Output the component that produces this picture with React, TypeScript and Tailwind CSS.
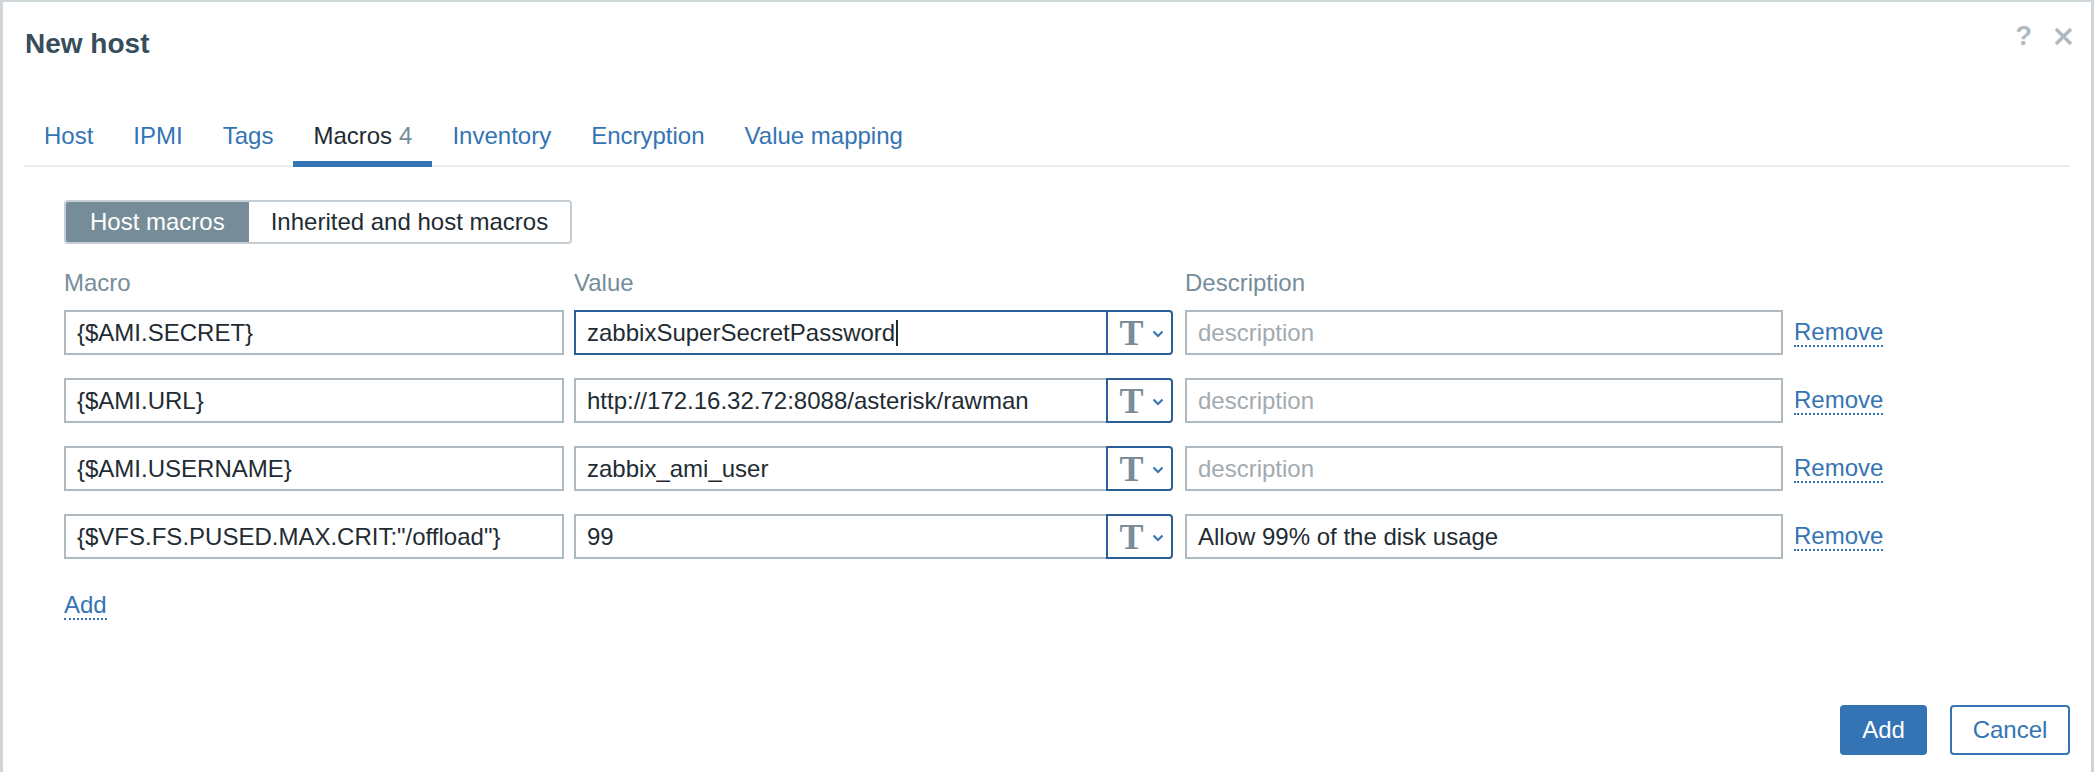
import React from "react";

const FONT = { fontFamily: '"Liberation Sans", Arial, sans-serif' };

type Row = { macro: string; value: string; desc: string; focused?: boolean };

const ROWS: Row[] = [
  { macro: "{$AMI.SECRET}", value: "zabbixSuperSecretPassword", desc: "", focused: true },
  { macro: "{$AMI.URL}", value: "http://172.16.32.72:8088/asterisk/rawman", desc: "" },
  { macro: "{$AMI.USERNAME}", value: "zabbix_ami_user", desc: "" },
  { macro: '{$VFS.FS.PUSED.MAX.CRIT:"/offload"}', value: "99", desc: "Allow 99% of the disk usage" },
];

const TABS = ["Host", "IPMI", "Tags", "Macros", "Inventory", "Encryption", "Value mapping"];

function TypeButton() {
  return (
    <div className="flex h-full w-[67px] shrink-0 items-center justify-center gap-[8px] rounded-r-[4px] border-2 border-[#2b5f97] bg-white pl-[4px]">
      <span className="text-[36px] font-bold leading-none text-[#7a8c98]" style={{ fontFamily: '"Liberation Serif", "Times New Roman", serif' }}>
        T
      </span>
      <svg width="12" height="8" viewBox="0 0 12 8" className="mt-[2px]">
        <path d="M1.5 1.5 L6 6 L10.5 1.5" fill="none" stroke="#3474b4" strokeWidth="2" />
      </svg>
    </div>
  );
}

function MacroRow({ r }: { r: Row }) {
  return (
    <div className="flex h-[45px] items-stretch">
      <div className="flex w-[500px] items-center border-2 border-[#aeb9c0] pl-[11px] text-[#1f2c33]">{r.macro}</div>
      <div className="ml-[10px] flex w-[599px]">
        <div className={`flex flex-1 items-center border-y-2 border-l-2 pl-[11px] text-[#1f2c33] ${r.focused ? "border-[#2b5f97]" : "border-[#aeb9c0]"}`}>
          {r.value}
          {r.focused && <span className="ml-[1px] h-[26px] w-[2px] bg-[#1f2c33]" />}
        </div>
        <TypeButton />
      </div>
      <div className={`ml-[12px] flex w-[598px] items-center border-2 border-[#aeb9c0] pl-[11px] ${r.desc ? "text-[#1f2c33]" : "text-[#a3abb0]"}`}>
        {r.desc || "description"}
      </div>
      <div className="ml-[11px] flex items-center">
        <span className="border-b-2 border-dotted border-[#3474b4] leading-[26px] text-[#3474b4]">Remove</span>
      </div>
    </div>
  );
}

export default function App() {
  return (
    <div className="flex h-[772px] w-[2094px] flex-col overflow-hidden border-x-[3px] border-t-2 border-[#cfd6da] bg-white text-[24px]" style={FONT}>
      {/* header */}
      <div className="flex justify-between pl-[22px] pr-[18px]">
        <h4 className="pt-[26px] text-[28px] font-bold leading-[32px] text-[#384d5c]">New host</h4>
        <div className="flex items-center gap-[22px] pt-[10px]">
          <span className="text-[27px] font-bold leading-[28px] text-[#aeb9c0]">?</span>
          <svg width="19" height="19" viewBox="0 0 19 19">
            <path d="M2 2 L17 17 M17 2 L2 17" stroke="#aeb9c0" strokeWidth="3.4" />
          </svg>
        </div>
      </div>

      {/* tabs */}
      <div className="mx-[21px] mt-[52px] flex border-b-2 border-[#ebeef0]">
        {TABS.map((t) => (
          <div
            key={t}
            className={`-mb-[2px] border-b-[6px] px-[20px] pb-[11px] pt-[10px] leading-[28px] ${t === "Macros" ? "border-[#3474b4] text-[#1f2c33]" : "border-transparent text-[#3474b4]"}`}
          >
            {t}
            {t === "Macros" && <span className="ml-[7px] text-[#768d99]">4</span>}
          </div>
        ))}
      </div>

      {/* macros tab */}
      <div className="pl-[61px]">
        <div className="mt-[33px] flex h-[44px] w-fit overflow-hidden rounded-[4px] border-2 border-[#c5cdd2]">
          <div className="flex items-center bg-[#768d99] px-[24px] text-white">Host macros</div>
          <div className="flex items-center bg-white px-[22px] text-[#1f2c33]">Inherited and host macros</div>
        </div>

        <div className="mt-[25px] flex leading-[28px] text-[#768d99]">
          <span className="w-[510px]">Macro</span>
          <span className="w-[611px]">Value</span>
          <span>Description</span>
        </div>

        <div className="mt-[13px] flex flex-col gap-[23px]">
          {ROWS.map((r) => (
            <MacroRow key={r.macro} r={r} />
          ))}
        </div>

        <div className="mt-[28px]">
          <span className="border-b-2 border-dotted border-[#3474b4] leading-[26px] text-[#3474b4]">Add</span>
        </div>
      </div>

      {/* footer */}
      <div className="mt-auto mb-[17px] flex justify-end gap-[23px] pr-[21px]">
        <button className="h-[50px] w-[87px] rounded-[4px] bg-[#3474b4] text-white">Add</button>
        <button className="h-[50px] w-[120px] rounded-[4px] border-2 border-[#3474b4] bg-white text-[#3474b4]">Cancel</button>
      </div>
    </div>
  );
}
